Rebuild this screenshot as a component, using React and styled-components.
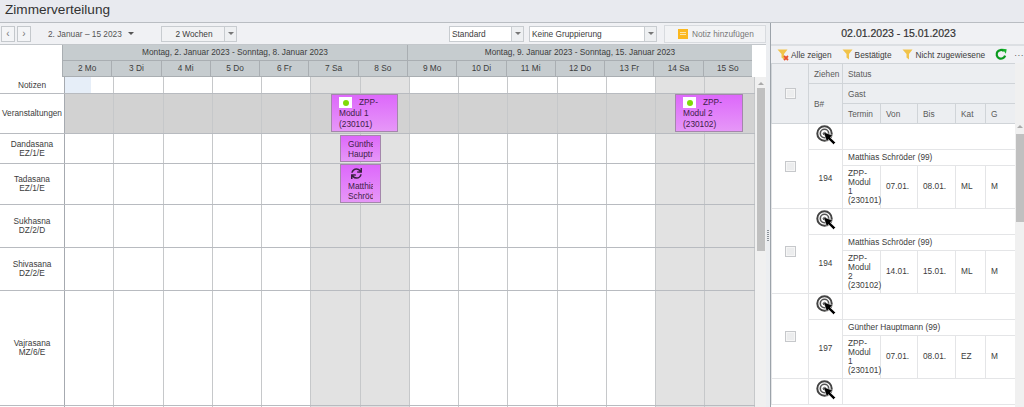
import React from 'react'
import styled, { createGlobalStyle } from 'styled-components'
import { FaSync } from 'react-icons/fa'

const GlobalStyle = createGlobalStyle`
  html, body {
    margin: 0;
    padding: 0;
    background: #fff;
  }
  body {
    font-family: "Liberation Sans", Arial, sans-serif;
    font-size: 8.3px;
    color: #3c3c3c;
  }
`

const weeks = ['Montag, 2. Januar 2023 - Sonntag, 8. Januar 2023', 'Montag, 9. Januar 2023 - Sonntag, 15. Januar 2023']
const days = ['2 Mo', '3 Di', '4 Mi', '5 Do', '6 Fr', '7 Sa', '8 So', '9 Mo', '10 Di', '11 Mi', '12 Do', '13 Fr', '14 Sa', '15 So']
const rooms = [
  { name: ['Notizen'], height: 17, kind: 'notes' },
  { name: ['Veranstaltungen'], height: 40, kind: 'events' },
  { name: ['Dandasana', 'EZ/1/E'], height: 30 },
  { name: ['Tadasana', 'EZ/1/E'], height: 41 },
  { name: ['Sukhasna', 'DZ/2/D'], height: 43 },
  { name: ['Shivasana', 'DZ/2/E'], height: 43 },
  { name: ['Vajrasana', 'MZ/6/E'], height: 115 },
  { name: [], height: 30 },
]
const bookings = [
  { id: 194, guest: 'Matthias Schröder (99)', event: 'ZPP-Modul 1 (230101)', from: '07.01.', to: '08.01.', cat: 'ML', g: 'M' },
  { id: 194, guest: 'Matthias Schröder (99)', event: 'ZPP-Modul 2 (230102)', from: '14.01.', to: '15.01.', cat: 'ML', g: 'M' },
  { id: 197, guest: 'Günther Hauptmann (99)', event: 'ZPP-Modul 1 (230101)', from: '07.01.', to: '08.01.', cat: 'EZ', g: 'M' },
]

const Page = styled.div`
  width: 1024px;
  height: 407px;
  overflow: hidden;
  display: flex;
  flex-direction: column;
`
const TitleBar = styled.header`
  height: 22px;
  flex: none;
  background: #e8eaef;
  border-bottom: 1px solid #b9bdc2;
  padding-left: 5px;
  font-size: 13.6px;
  line-height: 20px;
  color: #333;
`
const Main = styled.div`
  flex: 1;
  min-height: 0;
  display: flex;
`
const LeftPane = styled.section`
  width: 766px;
  flex: none;
  display: flex;
  flex-direction: column;
`
const Toolbar = styled.div`
  height: 21px;
  flex: none;
  display: flex;
  align-items: center;
  padding: 0 0 0 1px;
  background: #f0f1f4;
  border-bottom: 1px solid #c3c7cb;
`
const NavButton = styled.button`
  width: 14px;
  height: 16px;
  margin-right: 2px;
  padding: 0;
  border: 1px solid #c4c8cc;
  background: #f4f5f7;
  color: #777;
  font: 10px "Liberation Sans", sans-serif;
  display: flex;
  align-items: center;
  justify-content: center;
`
const DateRange = styled.span`
  margin-left: 15px;
  width: 113px;
  color: #555;
  display: flex;
  align-items: center;
  gap: 6px;
`
const Caret = styled.span`
  width: 0;
  height: 0;
  border-left: 3px solid transparent;
  border-right: 3px solid transparent;
  border-top: 3px solid ${p => p.$color || '#555'};
`
const Select = styled.div`
  width: ${p => p.$width}px;
  height: 16px;
  margin-left: ${p => p.$gap || 0}px;
  box-sizing: border-box;
  display: flex;
  border: 1px solid #c8ccd0;
  background: ${p => p.$muted ? '#f1f2f4' : '#fff'};
  color: #3c3c3c;
  line-height: 14px;
`
const SelectLabel = styled.span`
  flex: 1;
  padding-left: 2px;
  text-align: ${p => p.$center ? 'center' : 'left'};
`
const SelectArrow = styled.span`
  width: 11px;
  border-left: 1px solid #c8ccd0;
  background: #eef0f2;
  display: flex;
  align-items: center;
  justify-content: center;
`
const NoteButton = styled.div`
  width: 102px;
  height: 18px;
  margin-left: auto;
  box-sizing: border-box;
  border: 1px solid #d8dbdf;
  background: #f2f3f5;
  color: #777;
  display: flex;
  align-items: center;
  gap: 4px;
  padding-left: 13px;
  white-space: nowrap;
`
const NoteIcon = styled.span`
  width: 10px;
  height: 10px;
  background: #fbb81f;
  display: flex;
  flex-direction: column;
  align-items: center;
  justify-content: center;
  gap: 1px;
  &::before, &::after {
    content: '';
    width: 6px;
    height: 1px;
    background: #fde6a8;
  }
`
const HeaderBlock = styled.div`
  flex: none;
  display: flex;
  height: 32px;
  background: #fff;
`
const Corner = styled.div`
  width: 62px;
  flex: none;
`
const HeaderGrid = styled.div`
  width: 690px;
  display: grid;
  grid-template-columns: repeat(14, 1fr);
  grid-template-rows: 16px 16px;
`
const WeekCell = styled.div`
  grid-column: span 7;
  background: #c6cccf;
  border-left: 1px solid #a9aeb2;
  border-bottom: 1px solid #a9aeb2;
  text-align: center;
  line-height: 15px;
  color: #3c3c3c;
`
const DayCell = styled.div`
  background: #c6cccf;
  border-left: 1px solid #a9aeb2;
  border-bottom: 1px solid #a9aeb2;
  text-align: center;
  line-height: 15px;
  color: #3c3c3c;
`
const BodyArea = styled.div`
  flex: 1;
  min-height: 0;
  display: flex;
  overflow: hidden;
`
const RowsColumn = styled.div`
  width: 755px;
  flex: none;
`
const Row = styled.div`
  position: relative;
  height: ${p => p.$height}px;
  box-sizing: border-box;
  display: grid;
  grid-template-columns: 65px repeat(14, 49.25px);
  border-bottom: 1px solid #b8bbc0;
`
const RoomLabel = styled.div`
  display: flex;
  flex-direction: column;
  align-items: center;
  justify-content: center;
  border-right: 1px solid #a6aab0;
  line-height: 9px;
  color: #3c3c3c;
  white-space: nowrap;
`
const GridCell = styled.div`
  border-right: 1px solid #c6c8ca;
  background: ${p => p.$bg};
`
const NoteMark = styled.div`
  width: 26px;
  height: 100%;
  background: #e6eef8;
`
const EventCard = styled.div`
  position: absolute;
  left: ${p => p.$left}px;
  top: ${p => p.$top}px;
  width: ${p => p.$width}px;
  height: ${p => p.$h}px;
  box-sizing: border-box;
  border: 1px solid #a487ab;
  background: linear-gradient(#dd68fb, #e697f8);
  padding: ${p => p.$pad}px ${p => p.$right}px 0 7px;
  color: #3d2147;
  line-height: ${p => p.$line}px;
`
const EventClip = styled.div`
  overflow: hidden;
  white-space: nowrap;
`
const StatusBadge = styled.span`
  display: inline-flex;
  width: 13px;
  height: 11px;
  margin-right: 7px;
  background: #fff;
  align-items: center;
  justify-content: center;
  vertical-align: top;
  &::after {
    content: '';
    width: 6px;
    height: 6px;
    border-radius: 50%;
    background: #7fdb08;
  }
`
const SyncLine = styled.div`
  height: 11px;
  padding-left: 3px;
  color: #38203f;
  font-size: 11px;
  line-height: 11px;
  margin-bottom: 2px;
`
const ScrollTrack = styled.div`
  flex: 1;
  min-width: 0;
  background: #f0f0f0;
  display: flex;
  flex-direction: column;
  align-items: center;
`
const ScrollArrow = styled.span`
  width: 0;
  height: 0;
  flex: none;
  margin: ${p => p.$top}px 0 ${p => p.$bottom}px;
  border-left: 3px solid transparent;
  border-right: 3px solid transparent;
  border-bottom: 3px solid #aaa;
`
const ScrollThumb = styled.div`
  width: 8px;
  flex: none;
  height: ${p => p.$height}px;
  background: #c0c0c0;
`
const Splitter = styled.div`
  width: 5px;
  flex: none;
  box-sizing: border-box;
  background: #eceef1;
  border-right: 1px solid #9ca3aa;
  padding: 207px 0 0 1px;
`
const SplitterDots = styled.div`
  width: 2px;
  height: 11px;
  background: repeating-linear-gradient(#8d9399 0 1px, transparent 1px 2px);
`
const RightPane = styled.aside`
  flex: 1;
  min-width: 0;
  display: flex;
  flex-direction: column;
`
const RangeTitle = styled.div`
  height: 21px;
  flex: none;
  background: #f0f1f4;
  text-align: center;
  line-height: 21px;
  font-size: 10.5px;
  color: #333;
  -webkit-text-stroke: 0.2px #333;
  padding-left: 2px;
`
const FilterBar = styled.div`
  height: 19px;
  flex: none;
  box-sizing: border-box;
  background: #f0f1f4;
  border-top: 2px solid #dcdfe3;
  display: flex;
  align-items: center;
  padding-left: 6px;
  white-space: nowrap;
  color: #3c3c3c;
`
const FilterItem = styled.span`
  display: flex;
  align-items: center;
  gap: ${p => p.$gap}px;
  margin-right: 10px;
`
const More = styled.span`
  margin-left: 7px;
  letter-spacing: 0.5px;
  color: #555;
  line-height: 8px;
`
const TableRow = styled.div`
  flex: 1;
  min-height: 0;
  display: flex;
  overflow: hidden;
`
const TableArea = styled.div`
  width: 244px;
  flex: none;
  overflow: hidden;
`
const Table = styled.table`
  width: 244px;
  table-layout: fixed;
  border-collapse: collapse;
  font-size: 8.3px;
  color: #3c3c3c;
`
const Th = styled.th`
  height: ${p => p.$h || 20}px;
  padding: 0 0 0 ${p => p.$center ? 0 : 5}px;
  box-sizing: border-box;
  font-weight: normal;
  text-align: ${p => p.$center ? 'center' : 'left'};
  background: #eceef1;
  border: 1px solid #d0d4d8;
  color: #5a5a5a;
`
const Td = styled.td`
  height: ${p => p.$h}px;
  padding: 0 ${p => p.$narrow ? 8 : 0}px 0 ${p => p.$center ? 0 : 5}px;
  box-sizing: border-box;
  border: 1px solid #e4e5e7;
  text-align: ${p => p.$center ? 'center' : 'left'};
  line-height: 9.2px;
  color: #3c3c3c;
`
const CheckBox = styled.span`
  display: inline-block;
  width: 9px;
  height: 9px;
  vertical-align: middle;
  border: 1px solid #c6c8cb;
  background: #ecedee;
  box-shadow: inset 0 0 0 1px #f6f6f6;
`
const Wide = styled.col`
  width: ${p => p.$w}px;
`

const FunnelIcon = ({ cross }) => (
  <svg width="12" height="12" viewBox="0 0 12 12">
    <path d="M0.5 0.5 H10.5 L7 5 V10.5 L4.5 8.5 V5 Z" fill="#f1c34a" />
    {cross && <path d="M7 7 L11 11 M11 7 L7 11" stroke="#e8512d" strokeWidth="1.8" />}
  </svg>
)

const RefreshIcon = () => (
  <svg width="15" height="15" viewBox="0 0 15 15">
    <path d="M11 3.2 A5.4 5.4 0 1 0 12.6 9" fill="none" stroke="#0a9a1e" strokeWidth="2.8" />
    <path d="M9 0.5 L14.5 1 L13.5 6.5 Z" fill="#17b32c" />
  </svg>
)

const TargetIcon = () => (
  <svg width="20" height="20" viewBox="0 0 20 20">
    <circle cx="8.5" cy="8.5" r="7.2" fill="none" stroke="#444" strokeWidth="2" />
    <circle cx="8.5" cy="8.5" r="4.2" fill="none" stroke="#555" strokeWidth="1.6" />
    <circle cx="8.5" cy="8.5" r="1.8" fill="#333" />
    <path d="M7.5 7 L17 10.5 L14.2 12.4 L19.5 17.5 L17.5 19.5 L12.4 14.4 L10.8 17 Z" fill="#000" stroke="#fff" strokeWidth="0.5" />
  </svg>
)

const weekendIndex = [5, 6, 12, 13]

const cellBackground = (kind, i) => {
  if (kind === 'events') return '#d2d2d2'
  return weekendIndex.includes(i) ? '#e2e2e2' : '#fff'
}

const Scheduler = () => (
  <BodyArea>
    <RowsColumn>
      {rooms.map((room, r) => (
        <Row key={r} $height={room.height}>
          <RoomLabel>
            {room.name.map(line => <span key={line}>{line}</span>)}
          </RoomLabel>
          {days.map((d, i) => (
            <GridCell key={d} $bg={cellBackground(room.kind, i)}>
              {room.kind === 'notes' && i === 0 && <NoteMark />}
            </GridCell>
          ))}
          {room.kind === 'events' && (
            <>
              <EventCard $left={331} $top={0} $width={67} $h={38} $pad={2} $right={17} $line={11}>
                <StatusBadge />ZPP-Modul 1 (230101)
              </EventCard>
              <EventCard $left={675} $top={0} $width={68} $h={38} $pad={2} $right={18} $line={11}>
                <StatusBadge />ZPP-Modul 2 (230102)
              </EventCard>
            </>
          )}
          {r === 2 && (
            <EventCard $left={340} $top={1} $width={41} $h={27} $pad={3} $right={7} $line={10}>
              <EventClip>Günther<br />Hauptmann</EventClip>
            </EventCard>
          )}
          {r === 3 && (
            <EventCard $left={340} $top={0} $width={41} $h={39} $pad={3} $right={7} $line={10}>
              <SyncLine><FaSync /></SyncLine>
              <EventClip>Matthias<br />Schröder</EventClip>
            </EventCard>
          )}
        </Row>
      ))}
    </RowsColumn>
    <ScrollTrack>
      <ScrollArrow $top={5} $bottom={3} />
      <ScrollThumb $height={163} />
    </ScrollTrack>
  </BodyArea>
)

const BookingRows = ({ booking }) => (
  <>
    <tr>
      <Td $h={26} $center rowSpan={3}><CheckBox /></Td>
      <Td $h={26} $center><TargetIcon /></Td>
      <Td $h={26} colSpan={5} />
    </tr>
    <tr>
      <Td $h={16} $center rowSpan={2}>{booking.id}</Td>
      <Td $h={16} colSpan={5}>{booking.guest}</Td>
    </tr>
    <tr>
      <Td $h={43} $narrow>{booking.event}</Td>
      <Td $h={43}>{booking.from}</Td>
      <Td $h={43}>{booking.to}</Td>
      <Td $h={43}>{booking.cat}</Td>
      <Td $h={43}>{booking.g}</Td>
    </tr>
  </>
)

export default function App() {
  return (
    <Page>
      <GlobalStyle />
      <TitleBar>Zimmerverteilung</TitleBar>
      <Main>
        <LeftPane>
          <Toolbar>
            <NavButton>‹</NavButton>
            <NavButton>›</NavButton>
            <DateRange>2. Januar – 15 2023 <Caret /></DateRange>
            <Select $width={76} $muted>
              <SelectLabel $center>2 Wochen</SelectLabel>
              <SelectArrow><Caret $color="#777" /></SelectArrow>
            </Select>
            <Select $width={75} $gap={212}>
              <SelectLabel>Standard</SelectLabel>
              <SelectArrow><Caret $color="#777" /></SelectArrow>
            </Select>
            <Select $width={128} $gap={5}>
              <SelectLabel>Keine Gruppierung</SelectLabel>
              <SelectArrow><Caret $color="#777" /></SelectArrow>
            </Select>
            <NoteButton><NoteIcon />Notiz hinzufügen</NoteButton>
          </Toolbar>
          <HeaderBlock>
            <Corner />
            <HeaderGrid>
              {weeks.map(w => <WeekCell key={w}>{w}</WeekCell>)}
              {days.map(d => <DayCell key={d}>{d}</DayCell>)}
            </HeaderGrid>
          </HeaderBlock>
          <Scheduler />
        </LeftPane>
        <Splitter><SplitterDots /></Splitter>
        <RightPane>
          <RangeTitle>02.01.2023 - 15.01.2023</RangeTitle>
          <FilterBar>
            <FilterItem $gap={2}><FunnelIcon cross />Alle zeigen</FilterItem>
            <FilterItem $gap={1}><FunnelIcon />Bestätigte</FilterItem>
            <FilterItem $gap={2}><FunnelIcon />Nicht zugewiesene</FilterItem>
            <RefreshIcon />
            <More>···</More>
          </FilterBar>
          <TableRow>
            <TableArea>
              <Table>
                <colgroup>
                  <Wide $w={37} /><Wide $w={34} /><Wide $w={38} /><Wide $w={37} /><Wide $w={38} /><Wide $w={30} /><Wide $w={30} />
                </colgroup>
                <thead>
                  <tr>
                    <Th rowSpan={3} $center><CheckBox /></Th>
                    <Th>Ziehen</Th>
                    <Th colSpan={5}>Status</Th>
                  </tr>
                  <tr>
                    <Th rowSpan={2}>B#</Th>
                    <Th colSpan={5}>Gast</Th>
                  </tr>
                  <tr>
                    <Th>Termin</Th>
                    <Th>Von</Th>
                    <Th>Bis</Th>
                    <Th>Kat</Th>
                    <Th>G</Th>
                  </tr>
                </thead>
                <tbody>
                  {bookings.map((b, i) => <BookingRows key={i} booking={b} />)}
                  <tr>
                    <Td $h={26} />
                    <Td $h={26} $center><TargetIcon /></Td>
                    <Td $h={26} colSpan={5} />
                  </tr>
                </tbody>
              </Table>
            </TableArea>
            <ScrollTrack>
              <ScrollArrow $top={62} $bottom={6} />
              <ScrollThumb $height={88} />
            </ScrollTrack>
          </TableRow>
        </RightPane>
      </Main>
    </Page>
  )
}
